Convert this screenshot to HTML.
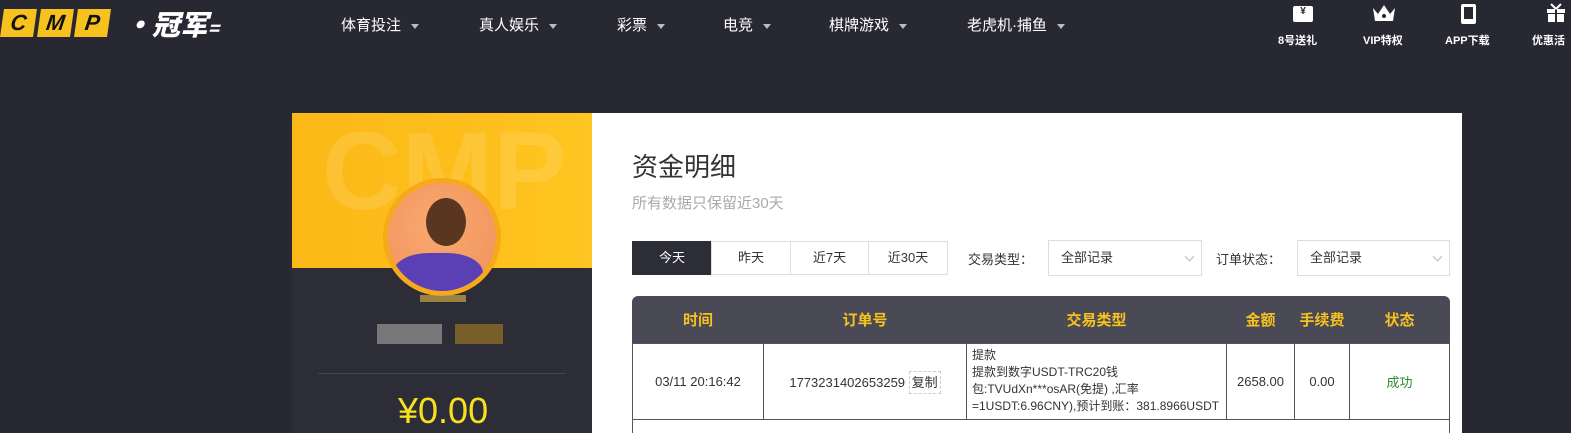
<!DOCTYPE html>
<html style="width:1571px;height:433px;overflow:hidden"><head><meta charset="utf-8"><style>
*{margin:0;padding:0;box-sizing:border-box}
body{width:1571px;height:433px;overflow:hidden;background:#282833;font-family:"Liberation Sans","Noto Sans CJK SC",sans-serif;position:relative}
.a{position:absolute}
.nav{color:#fff;font-size:15px;top:14px}
.nav i{display:inline-block;width:0;height:0;border-left:4px solid transparent;border-right:4px solid transparent;border-top:5px solid #bbb;margin-left:10px;vertical-align:middle}
.ic{color:#fff;font-size:11px;text-align:center;top:32px;font-weight:bold}
.logo span{display:inline-block;width:33px;height:28px;background:#f7c21e;color:#111;font:italic 900 22px "Liberation Sans",sans-serif;text-align:center;line-height:28px;margin-right:4px;transform:skewX(-8deg)}
.btn{top:241px;height:34px;border:1px solid #ddd;font-size:13px;text-align:center;line-height:32px;color:#333;background:#fff}
.sel{top:240px;height:36px;border:1px solid #ddd;font-size:13px;line-height:34px;padding-left:12px;color:#333}
.sel:after{content:"";position:absolute;right:8px;top:12px;width:6px;height:6px;border-right:1px solid #bbb;border-bottom:1px solid #bbb;transform:rotate(45deg)}
table{border-collapse:collapse;position:absolute;left:632px;top:296px;width:818px;font-size:13px;color:#333}
th{color:#f7c21e;height:47px;font-size:15px;font-weight:bold}
td{border:1px solid #555;height:76px;text-align:center;background:#fff}
</style></head><body>
<div class="a logo" style="left:2px;top:9px"><span>C</span><span>M</span><span>P</span></div>
<div class="a" style="left:124px;top:4px;color:#fff;font:italic 900 28px 'Noto Sans CJK SC',sans-serif">·冠军<span style="font-size:18px">=</span></div>
<div class="a nav" style="left:341px">体育投注<i></i></div>
<div class="a nav" style="left:479px">真人娱乐<i></i></div>
<div class="a nav" style="left:617px">彩票<i></i></div>
<div class="a nav" style="left:723px">电竞<i></i></div>
<div class="a nav" style="left:829px">棋牌游戏<i></i></div>
<div class="a nav" style="left:967px">老虎机·捕鱼<i></i></div>
<div class="a" style="left:1293px;top:6px;width:20px;height:16px;background:#fff;border-radius:2px;color:#282833;font-size:10px;text-align:center;font-weight:bold">¥</div>
<div class="a ic" style="left:1278px">8号送礼</div>
<svg class="a" style="left:1372px;top:4px" width="24" height="18"><path d="M1 4 L6 10 L12 1 L18 10 L23 4 L21 17 L3 17Z" fill="#fff"/><circle cx="12" cy="12" r="2" fill="#282833"/></svg>
<div class="a ic" style="left:1363px">VIP特权</div>
<div class="a" style="left:1461px;top:4px;width:15px;height:20px;border:2px solid #fff;border-radius:2px;background:#fff"><div style="margin:1px;width:9px;height:12px;background:#282833"></div></div>
<div class="a ic" style="left:1445px">APP下载</div>
<svg class="a" style="left:1546px;top:3px" width="20" height="20"><rect x="1" y="6" width="18" height="4" fill="#fff"/><rect x="2" y="11" width="16" height="8" fill="#fff"/><rect x="9" y="3" width="2" height="17" fill="#282833"/><path d="M10 6 L5 1 M10 6 L15 1" stroke="#fff" stroke-width="2"/></svg>
<div class="a ic" style="left:1532px">优惠活</div>

<div class="a" style="left:292px;top:113px;width:300px;height:320px;background:#2d2d38"></div>
<div class="a" style="left:292px;top:113px;width:300px;height:155px;background:linear-gradient(90deg,#fbb918,#fdbd1a,#fec622);overflow:hidden"><div style="position:absolute;left:30px;top:-5px;font:bold 110px 'Liberation Sans';color:rgba(255,255,255,.12)">CMP</div></div>
<div class="a" style="left:383px;top:178px;width:118px;height:118px;border-radius:50%;background:#f6a91b"></div>
<div class="a" style="left:388px;top:183px;width:108px;height:108px;border-radius:50%;background:radial-gradient(circle at 45% 40%,#f8a970,#f0915a);overflow:hidden"><div style="position:absolute;left:38px;top:15px;width:40px;height:48px;border-radius:50%;background:#5a3520"></div><div style="position:absolute;left:5px;top:70px;width:90px;height:50px;border-radius:40% 40% 0 0;background:#5b3fb5"></div></div>
<div class="a" style="left:420px;top:295px;width:46px;height:7px;background:#c9a54a;opacity:.7"></div>
<div class="a" style="left:377px;top:324px;width:65px;height:20px;background:#999;opacity:.7"></div>
<div class="a" style="left:455px;top:324px;width:48px;height:20px;background:#8b6c25;opacity:.8"></div>
<div class="a" style="left:318px;top:373px;width:248px;height:1px;background:#45454f"></div>
<div class="a" style="left:398px;top:390px;color:#f7e11e;font-size:36px">¥0.00</div>

<div class="a" style="left:592px;top:113px;width:870px;height:320px;background:#fff"></div>
<div class="a" style="left:632px;top:147px;font-size:26px;color:#333">资金明细</div>
<div class="a" style="left:632px;top:192px;font-size:15px;color:#aaa">所有数据只保留近30天</div>
<div class="a btn" style="left:632px;width:80px;background:#2d2d38;color:#fff;border-color:#2d2d38">今天</div>
<div class="a btn" style="left:711px;width:80px">昨天</div>
<div class="a btn" style="left:790px;width:79px">近7天</div>
<div class="a btn" style="left:868px;width:80px">近30天</div>
<div class="a" style="left:968px;top:249px;font-size:13px;color:#333">交易类型：</div>
<div class="a sel" style="left:1048px;width:154px">全部记录</div>
<div class="a" style="left:1216px;top:249px;font-size:13px;color:#333">订单状态：</div>
<div class="a sel" style="left:1297px;width:153px">全部记录</div>
<div class="a" style="left:632px;top:296px;width:818px;height:47px;background:#4a4956;border-radius:6px 6px 0 0"></div>
<table>
<tr><th style="width:131px">时间</th><th style="width:203px">订单号</th><th style="width:260px">交易类型</th><th style="width:68px">金额</th><th style="width:55px">手续费</th><th>状态</th></tr>
<tr><td>03/11 20:16:42</td><td>1773231402653259 <span style="border:1px dashed #ccc;padding:3px 2px">复制</span></td><td style="text-align:left;font-size:12px;line-height:17px;padding-left:5px">提款<br>提款到数字USDT-TRC20钱<br>包:TVUdXn***osAR(免提) ,汇率<br>=1USDT:6.96CNY),预计到账：381.8966USDT</td><td>2658.00</td><td>0.00</td><td style="color:#2e8b2e">成功</td></tr>
</table>
<div class="a" style="left:632px;top:419px;width:818px;height:14px;border:1px solid #555;border-bottom:none;background:#fff"></div>
</body></html>
